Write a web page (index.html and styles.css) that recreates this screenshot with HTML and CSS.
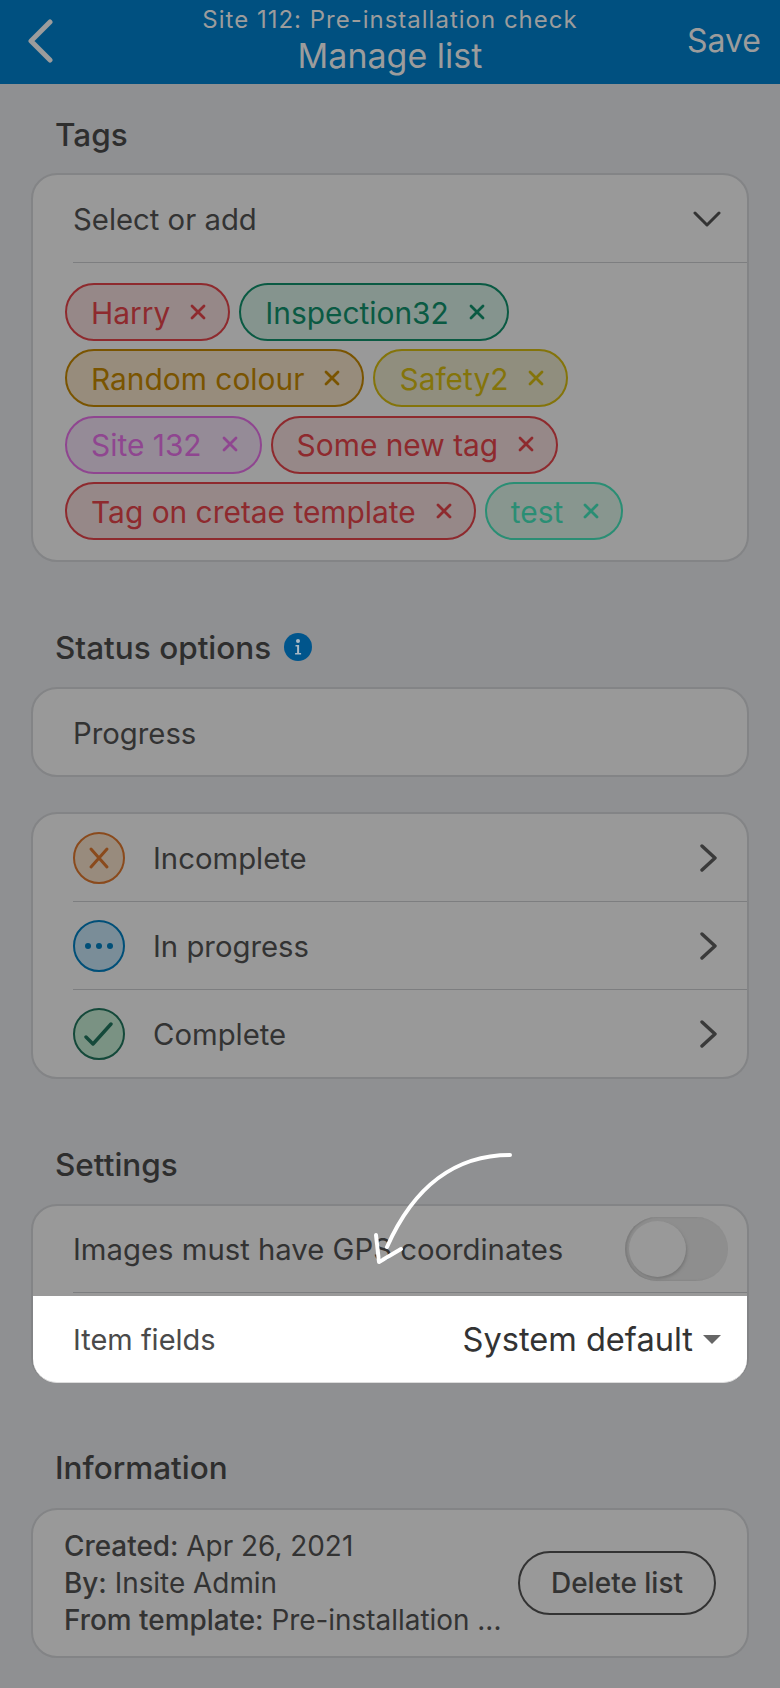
FILE: index.html
```html
<!DOCTYPE html>
<html lang="en">
<head>
    <meta charset="UTF-8">
    <meta name="viewport" content="width=device-width, initial-scale=1.0">
    <title>Manage list</title>
    <link rel="stylesheet" href="styles.css">
</head>
<body>
    <header class="topbar">
        <svg class="back-icon" width="26" height="44" viewBox="0 0 26 44"><path d="M23 3 4 22l19 19" fill="none" stroke="#9c9c9c" stroke-width="5" stroke-linecap="round" stroke-linejoin="round"/></svg>
        <div class="topbar-titles">
            <div class="topbar-sub">Site 112: Pre-installation check</div>
            <div class="topbar-title">Manage list</div>
        </div>
        <div class="topbar-save">Save</div>
    </header>

    <main class="content">
        <!-- Tags -->
        <h2 class="section-title first">Tags</h2>
        <div class="card">
            <div class="row select-row">
                <span>Select or add</span>
                <svg width="28" height="18" viewBox="0 0 28 18"><path d="M2 3l12 12L26 3" fill="none" stroke="#333" stroke-width="3" stroke-linecap="round" stroke-linejoin="round"/></svg>
            </div>
            <div class="chips">
                <span class="chip chip-red">Harry <svg class="chip-x" viewBox="0 0 16 16"><path d="M2 2l12 12M14 2 2 14"/></svg></span>
                <span class="chip chip-green">Inspection32 <svg class="chip-x" viewBox="0 0 16 16"><path d="M2 2l12 12M14 2 2 14"/></svg></span>
                <span class="chip chip-orange">Random colour <svg class="chip-x" viewBox="0 0 16 16"><path d="M2 2l12 12M14 2 2 14"/></svg></span>
                <span class="chip chip-yellow">Safety2 <svg class="chip-x" viewBox="0 0 16 16"><path d="M2 2l12 12M14 2 2 14"/></svg></span>
                <span class="chip chip-purple">Site 132 <svg class="chip-x" viewBox="0 0 16 16"><path d="M2 2l12 12M14 2 2 14"/></svg></span>
                <span class="chip chip-red">Some new tag <svg class="chip-x" viewBox="0 0 16 16"><path d="M2 2l12 12M14 2 2 14"/></svg></span>
                <span class="chip chip-red">Tag on cretae template <svg class="chip-x" viewBox="0 0 16 16"><path d="M2 2l12 12M14 2 2 14"/></svg></span>
                <span class="chip chip-teal">test <svg class="chip-x" viewBox="0 0 16 16"><path d="M2 2l12 12M14 2 2 14"/></svg></span>
            </div>
        </div>

        <!-- Status options -->
        <h2 class="section-title">Status options
            <svg class="info-icon" width="28" height="28" viewBox="0 0 28 28"><circle cx="14" cy="14" r="14" fill="#00558c"/><circle cx="14" cy="8" r="2" fill="#a8b8c4"/><path d="M11.5 12h3.600v8h2v1.600h-6V20h2v-6.400h-1.600z" fill="#a8b8c4"/></svg>
        </h2>
        <div class="card progress-card"><span class="nudge">Progress</span></div>
        <div class="card status-card">
            <div class="row status-row">
                <span class="status-circle circle-orange">
                    <svg width="24" height="24" viewBox="0 0 24 24"><path d="M4 3l16 18M20 3 4 21" fill="none" stroke="#8a4a1c" stroke-width="3" stroke-linecap="round"/></svg>
                </span>
                <span class="status-label">Incomplete</span>
                <svg class="chevron" width="18" height="28" viewBox="0 0 18 28"><path d="M2 2l13 12L2 26" fill="none" stroke="#3a3a3a" stroke-width="3.400" stroke-linecap="round" stroke-linejoin="round"/></svg>
            </div>
            <div class="row status-row">
                <span class="status-circle circle-blue">
                    <svg width="30" height="8" viewBox="0 0 30 8"><circle cx="4" cy="4" r="3" fill="#004f78"/><circle cx="15" cy="4" r="3" fill="#004f78"/><circle cx="26" cy="4" r="3" fill="#004f78"/></svg>
                </span>
                <span class="status-label">In progress</span>
                <svg class="chevron" width="18" height="28" viewBox="0 0 18 28"><path d="M2 2l13 12L2 26" fill="none" stroke="#3a3a3a" stroke-width="3.400" stroke-linecap="round" stroke-linejoin="round"/></svg>
            </div>
            <div class="row status-row last">
                <span class="status-circle circle-green">
                    <svg width="30" height="24" viewBox="0 0 30 24"><path d="M2 15l7 7L27 2" fill="none" stroke="#14493a" stroke-width="3.400" stroke-linecap="round" stroke-linejoin="round"/></svg>
                </span>
                <span class="status-label">Complete</span>
                <svg class="chevron" width="18" height="28" viewBox="0 0 18 28"><path d="M2 2l13 12L2 26" fill="none" stroke="#3a3a3a" stroke-width="3.400" stroke-linecap="round" stroke-linejoin="round"/></svg>
            </div>
        </div>

        <!-- Settings -->
        <h2 class="section-title">Settings</h2>
        <div class="card settings-card">
            <div class="row gps-row">
                <span>Images must have GPS coordinates</span>
                <span class="toggle"><span class="toggle-knob"></span></span>
            </div>
            <div class="highlight-row">
                <span class="field-label">Item fields</span>
                <span class="field-value">System default <span class="caret"></span></span>
            </div>
        </div>

        <!-- Information -->
        <h2 class="section-title info-title">Information</h2>
        <div class="card info-card">
            <div class="info-lines">
                <div><b>Created:</b> Apr 26, 2021</div>
                <div><b>By:</b> Insite Admin</div>
                <div><b>From template:</b> Pre-installation ...</div>
            </div>
            <button class="delete-btn" type="button">Delete list</button>
        </div>
    </main>

    <!-- Arrow drawn on top of the screenshot -->
    <svg class="arrow" width="160" height="130" viewBox="0 0 160 130">
        <path d="M144 7C90 7 48 38 21 99" fill="none" stroke="#fff" stroke-width="4" stroke-linecap="round"/>
        <path d="M10 87l3 27 22-13" fill="none" stroke="#fff" stroke-width="4" stroke-linecap="round" stroke-linejoin="round"/>
    </svg>
</body>
</html>
```

FILE: styles.css
```css
* {
    box-sizing: border-box;
}
html, body {
    margin: 0;
    padding: 0;
}
body {
    position: relative;
    width: 780px;
    height: 1688px;
    overflow: hidden;
    background-color: #8f9092;
    color: #333;
    font-family: Inter, "Liberation Sans", sans-serif;
    font-size: 29.3px;
}

/* Header */
.topbar {
    position: relative;
    height: 84px;
    background-color: #005080;
    color: #9c9c9c;
}
.back-icon {
    position: absolute;
    left: 27px;
    top: 19px;
}
.topbar-titles {
    text-align: center;
}
.topbar-sub {
    height: 37px;
    font-size: 24px;
    line-height: 39px;
    letter-spacing: 1px;
}
.topbar-title {
    font-size: 34px;
    line-height: 38px;
}
.topbar-save {
    position: absolute;
    right: 19px;
    top: 21px;
    font-size: 32px;
    line-height: 40px;
}

/* Sections */
.content {
    padding: 0 31px;
}
.section-title {
    display: flex;
    align-items: center;
    gap: 13px;
    height: 34px;
    margin: 68px 0 23px;
    padding-left: 24px;
    font-size: 31.5px;
    font-weight: 500;
    color: #2e2e2e;
}
.section-title.first {
    margin: 33px 0 22px;
}
.section-title.info-title {
    margin: 67px 0 24px;
}
.card {
    border: 2px solid #838486;
    border-radius: 26px;
    background-color: #999;
}

/* Rows */
.row {
    display: flex;
    align-items: center;
    margin-left: 40px;
    border-bottom: 1px solid #7d7e80;
}
.select-row {
    justify-content: space-between;
    height: 88px;
    padding-right: 26px;
}
.select-row span, .nudge, .status-label {
    padding-top: 2px;
}

/* Tags */
.chips {
    display: flex;
    flex-wrap: wrap;
    gap: 8.4px 9px;
    padding: 20px 32px;
}
.chip {
    display: flex;
    align-items: center;
    gap: 20px;
    height: 58px;
    padding: 1px 22px 0 24px;
    border: 2px solid;
    border-radius: 29px;
    font-size: 29.9px;
}
.chip-x {
    width: 16px;
    height: 16px;
    margin-top: -2px;
    fill: none;
    stroke: currentColor;
    stroke-width: 2.800;
    stroke-linecap: round;
}
.chip-red {
    color: #8e2a2e;
    background-color: #968888;
}
.chip-green {
    color: #0a5a43;
    background-color: #85948e;
}
.chip-orange {
    color: #7a5400;
    background-color: #978c7c;
}
.chip-yellow {
    color: #84740a;
    background-color: #908e7e;
}
.chip-purple {
    color: #8f4690;
    background-color: #958b97;
}
.chip-teal {
    color: #2a8e74;
    background-color: #88968f;
}

/* Status options */
.progress-card {
    display: flex;
    align-items: center;
    height: 90px;
    margin-bottom: 35px;
    padding-left: 40px;
}
.status-row {
    height: 88px;
}
.status-row.last {
    height: 87px;
    border-bottom: none;
}
.status-circle {
    display: flex;
    align-items: center;
    justify-content: center;
    flex: none;
    width: 52px;
    height: 52px;
    border: 2px solid;
    border-radius: 50%;
}
.circle-orange {
    border-color: #8a4a1c;
    background-color: #988b7d;
}
.circle-blue {
    border-color: #004f78;
    background-color: #7a8d98;
}
.circle-green {
    border-color: #14493a;
    background-color: #7a9283;
}
.status-label {
    flex: 1;
    margin-left: 28px;
}
.chevron {
    margin-right: 29px;
}

/* Settings */
.settings-card {
    height: 179px;
}
.gps-row {
    justify-content: space-between;
    height: 87px;
    padding-right: 19px;
}
.toggle {
    display: block;
    width: 103px;
    height: 64px;
    padding: 4px;
    border-radius: 32px;
    background-color: #8e8e8e;
    box-shadow: inset 2px 0 2px #7c7c7c;
}
.toggle-knob {
    display: block;
    width: 57px;
    height: 56px;
    border-radius: 50%;
    background-color: #999;
    box-shadow: 1px 2px 3px #777;
}
.highlight-row {
    display: flex;
    align-items: center;
    justify-content: space-between;
    height: 87px;
    margin-top: 3px;
    padding: 0 26px 0 40px;
    border-bottom: 1px solid #ddd;
    border-radius: 0 0 24px 24px;
    background-color: #fff;
}
.field-label {
    font-size: 29px;
    color: #4a4a4a;
}
.field-value {
    display: flex;
    align-items: center;
    gap: 10px;
    font-size: 32.6px;
}
.caret {
    width: 0;
    height: 0;
    border-left: 9px solid transparent;
    border-right: 9px solid transparent;
    border-top: 9px solid #666;
}

/* Information */
.info-card {
    display: flex;
    align-items: center;
    justify-content: space-between;
    height: 150px;
    padding: 0 31px;
}
.info-lines {
    font-size: 27.9px;
    line-height: 37px;
}
.info-lines b {
    font-weight: 500;
}
.delete-btn {
    flex: none;
    width: 198px;
    height: 64px;
    border: 2px solid #333;
    border-radius: 32px;
    background: none;
    color: #333;
    font-family: inherit;
    font-size: 28px;
    font-weight: 500;
}

/* Arrow */
.arrow {
    position: absolute;
    left: 366px;
    top: 1148px;
}
```
